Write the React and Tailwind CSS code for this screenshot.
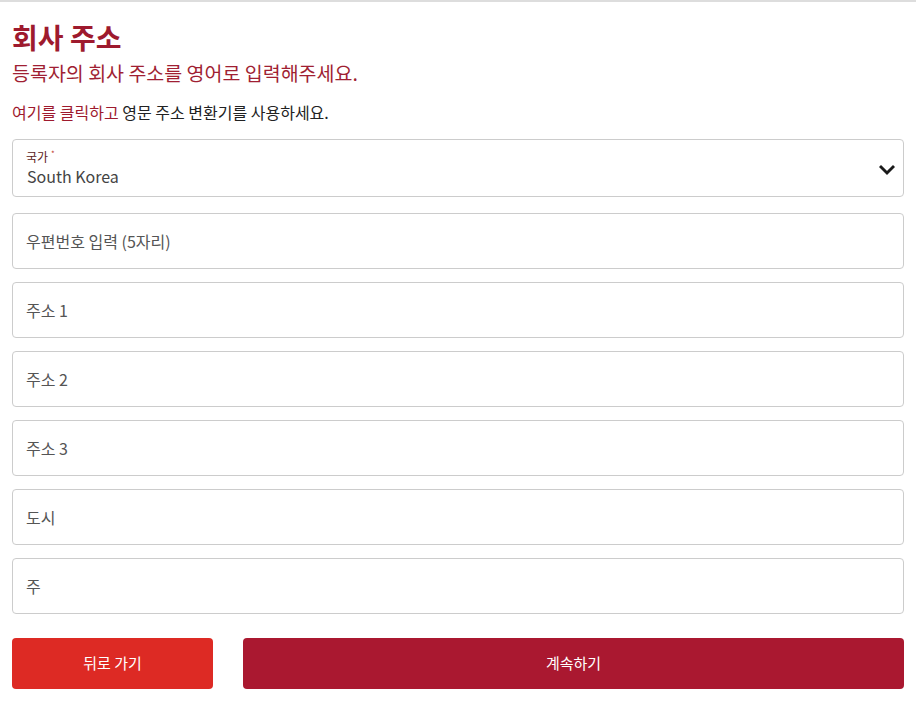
import React from "react";

const font = { fontFamily: '"Noto Sans CJK KR", "Noto Sans", sans-serif' };

function Field({ placeholder }) {
  return (
    <div className="h-[56px] rounded-[4px] border border-[#cccccc] bg-white flex items-center px-[13px]">
      <input
        className="w-full outline-none text-[16px] text-[#333] placeholder:text-[#555] bg-transparent"
        placeholder={placeholder}
        style={font}
      />
    </div>
  );
}

export default function App() {
  return (
    <div className="w-[916px] h-[705px] bg-white border-t-2 border-[#dddddd]" style={font}>
      <div className="px-[12px] pt-[17px]">
        <h1 className="text-[28px] leading-[36px] font-bold text-[#9e1a2e]">회사 주소</h1>
        <p className="mt-[4px] text-[19.5px] leading-[28px] text-[#a01f33]">
          등록자의 회사 주소를 영어로 입력해주세요.
        </p>
        <p className="mt-[14px] text-[16px] leading-[22px] text-[#222]">
          <span className="text-[#9e1a2e]">여기를 클릭하고</span> 영문 주소 변환기를 사용하세요.
        </p>

        <div className="mt-[16px] h-[58px] rounded-[4px] border border-[#cccccc] bg-white flex items-center justify-between pl-[13px] pr-[8px]">
          <div className="flex flex-col gap-[2px]">
            <span className="flex items-start gap-[3px] text-[12px] leading-[14px] text-[#5b1a22]">
              국가<span className="text-[#c0392b] text-[8px] leading-[8px]">*</span>
            </span>
            <span className="text-[16px] leading-[20px] text-[#444] ml-[1px]">South Korea</span>
          </div>
          <svg width="16" height="12" viewBox="0 0 16 12" className="mt-[4px]">
            <path d="M2 3 L8 9 L14 3" fill="none" stroke="#1a1a1a" strokeWidth="3" strokeLinecap="square" />
          </svg>
        </div>

        <div className="mt-[16px] flex flex-col gap-[13px]">
          <Field placeholder="우편번호 입력 (5자리)" />
          <Field placeholder="주소 1" />
          <Field placeholder="주소 2" />
          <Field placeholder="주소 3" />
          <Field placeholder="도시" />
          <Field placeholder="주" />
        </div>

        <div className="mt-[24px] flex gap-[30px]">
          <button className="w-[201px] h-[51px] rounded-[4px] bg-[#dd2a24] text-white text-[15px]">
            뒤로 가기
          </button>
          <button className="flex-1 h-[51px] rounded-[4px] bg-[#aa1830] text-white text-[15px]">
            계속하기
          </button>
        </div>
      </div>
    </div>
  );
}
